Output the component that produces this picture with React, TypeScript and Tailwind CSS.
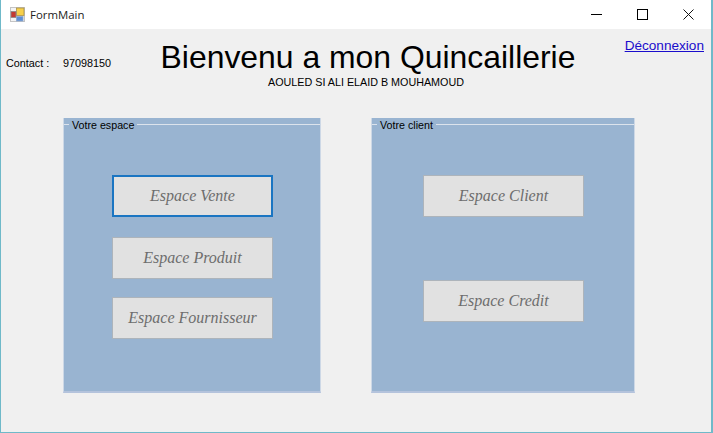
const panelBtn = "flex items-center justify-center bg-[#e1e1e1] border border-[#adb4bb] text-[#6d6d6d] italic text-[16px] [font-family:'Liberation_Serif',serif]";

const GroupTitle = ({ title }: { title: string }) => {
  return (
    <div className="flex items-start h-[15px]">
      <div className="w-[5px] mt-[5px] border-t border-[#dce3ec]" />
      <span className="px-[3px] text-[10.7px] leading-[13px] text-black">{title}</span>
      <div className="flex-1 mt-[5px] border-t border-[#dce3ec]" />
    </div>
  );
};

const App = () => {
  return (
    <div className="w-[713px] h-[433px] flex flex-col overflow-hidden bg-[#f0f0f0] border-l border-r-2 border-b border-[#6fb9c9] [font-family:'Liberation_Sans',sans-serif]">
      <div className="h-[29px] shrink-0 bg-white flex items-center pl-[9px]">
        <svg width="15" height="15" viewBox="0 0 15 15" className="shrink-0">
          <rect x="0.5" y="0.5" width="14" height="14" fill="#f4f4f4" stroke="#c4c4c4" />
          <rect x="6.5" y="1" width="7.5" height="7.5" fill="#f6cf4a" stroke="#a8904a" strokeWidth="0.8" />
          <rect x="1" y="4.5" width="5" height="6" fill="#c43a32" stroke="#8a8a8a" strokeWidth="0.8" />
          <rect x="6.5" y="9.5" width="6.5" height="4.5" fill="#5d8fd6" stroke="#8fa8cc" strokeWidth="0.8" />
        </svg>
        <span className="ml-[5px] text-[11.4px] text-[#222] [font-family:'Open_Sans',sans-serif]">FormMain</span>
        <div className="ml-auto flex items-center">
          <div className="w-[46px] h-[29px] flex items-center justify-center">
            <div className="w-[11px] border-t border-black" />
          </div>
          <div className="w-[46px] h-[29px] flex items-center justify-center">
            <div className="w-[11px] h-[11px] border border-black" />
          </div>
          <div className="w-[46px] h-[29px] flex items-center justify-center">
            <svg width="11" height="11" viewBox="0 0 11 11" fill="none" stroke="#111" strokeWidth="1">
              <path d="M0.5 0.5 L10.5 10.5 M10.5 0.5 L0.5 10.5" />
            </svg>
          </div>
        </div>
      </div>

      <div className="h-[89px] shrink-0 flex items-start">
        <div className="w-[154px] shrink-0 pl-[5px] pt-[28px] flex text-[10.8px] leading-[13px] text-black">
          <span className="w-[57px]">Contact :</span>
          <span>97098150</span>
        </div>
        <div className="w-[426px] shrink-0 flex flex-col items-center pt-[9px]">
          <h1 className="text-[31.9px] leading-[38px] text-black whitespace-nowrap">Bienvenu a mon Quincaillerie</h1>
          <p className="mr-[4px] text-[10.75px] leading-[13px] text-black whitespace-nowrap">AOULED SI ALI ELAID B MOUHAMOUD</p>
        </div>
        <a className="ml-auto mr-[7px] mt-[9px] text-[13.6px] leading-[16px] text-[#1a0dcc] underline cursor-pointer">Déconnexion</a>
      </div>

      <div className="flex pl-[62px] gap-[50px]">
        <div className="w-[258px] h-[275px] bg-[#99b4d1] border-l border-r border-[#cdd8e6] [border-bottom:2px_solid_#b4c3dc] pt-[1px] flex flex-col">
          <GroupTitle title="Votre espace" />
          <div className="flex flex-col pl-[48px] pt-[41px]">
            <button className={panelBtn + " w-[161px] h-[42px] !border-2 !border-[#1a75c2]"}>Espace Vente</button>
            <button className={panelBtn + " w-[161px] h-[42px] mt-[20px]"}>Espace Produit</button>
            <button className={panelBtn + " w-[161px] h-[42px] mt-[18px]"}>Espace Fournisseur</button>
          </div>
        </div>
        <div className="w-[264px] h-[275px] bg-[#99b4d1] border-l border-r border-[#cdd8e6] [border-bottom:2px_solid_#b4c3dc] pt-[1px] flex flex-col">
          <GroupTitle title="Votre client" />
          <div className="flex flex-col pl-[51px] pt-[41px]">
            <button className={panelBtn + " w-[161px] h-[42px]"}>Espace Client</button>
            <button className={panelBtn + " w-[161px] h-[42px] mt-[63px]"}>Espace Credit</button>
          </div>
        </div>
      </div>
    </div>
  );
};

export default App;
